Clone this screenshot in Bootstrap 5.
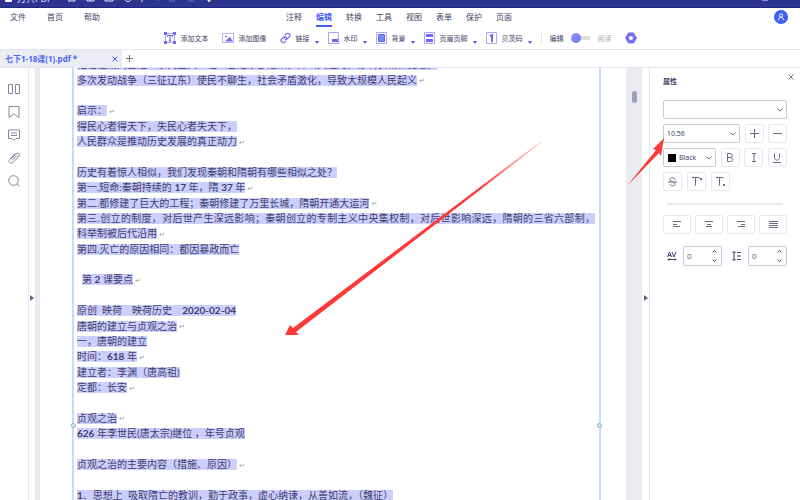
<!DOCTYPE html>
<html lang="zh-CN">
<head>
<meta charset="utf-8">
<meta name="viewport" content="width=device-width, initial-scale=1">
<title>七下1-18课(1).pdf</title>
<link href="https://cdn.jsdelivr.net/npm/bootstrap@5.3.0/dist/css/bootstrap.min.css" rel="stylesheet">
<style>
:root{--ink:#3f4268;--accent:#4a5ff0;--violet:#7467f5;--line:#e3e4ee;--field:#c9cad8}
body{font:8px/12px "Noto Sans CJK SC",sans-serif;color:var(--ink);background:#fff}
button{font:inherit;color:inherit;padding:0;border:0;background:none}
a{color:inherit;text-decoration:none}
svg{display:block;flex:none;fill:none;stroke:currentColor}
.title-strip{height:8px;background:#2c358f;border-bottom:1px solid #1d2680;color:#e8eafa}
.title-strip>div{height:16px}
.title-strip .dim{opacity:.35}
.brand{font-size:9px;font-family:"Open Sans","Noto Sans CJK SC",sans-serif}
.menu-row{height:18px}
.menu-left{gap:21px;padding-left:10px}
.menu-mid{gap:14px}
.side{flex:1 1 0}
.menu-mid a.on{color:var(--accent);font-weight:700;box-shadow:0 2px 0 #fff,0 4px 0 var(--accent)}
.avatar{width:14px;height:14px;background:#3d5cf5;color:#fff}
.tools{height:24px;gap:13px;font-size:7px;border-bottom:1px solid var(--line)}
.tools button{display:flex;align-items:center;gap:5px;white-space:nowrap}
.tools svg{color:var(--violet)}
.tools .drop::after{content:"";border:2px solid transparent;border-top:3px solid #5f50ee;border-bottom:0;margin-top:9px}
.tools .drop{margin-right:-4px}
.rule{width:1px;height:13px;background:var(--line)}
.mode{gap:7px;margin-left:-5px}
.form-check-input.sw{width:20px;height:10px;margin:0;border:0;background:linear-gradient(#dcdcdc,#dcdcdc) 5px 3px/14px 4px no-repeat;position:relative;float:none;box-shadow:none}
.form-check-input.sw::before{content:"";display:block;width:10px;height:10px;border-radius:50%;background:linear-gradient(135deg,#9593ff,#6578f5)}
.tabs{height:18px;border-bottom:1px solid var(--line)}
.file-tab{width:122px;background:#ebecf4;color:#4c66f5;font:700 8px/12px "Open Sans","Noto Sans CJK SC",sans-serif;padding:0 4px 0 5px}
.tab-new{width:14px;color:#777}
.rail{width:29px;border-right:1px solid var(--line);padding-top:13px;gap:7px;color:#84869b}
.rail button{height:16px}
.hinge{width:6px}
.hinge-r{width:8px;border-right:1px solid #e4e4ec}
.tri{border:3px solid transparent;border-left:4px solid #62657f;border-right:0;margin-top:28px}
.gutter{width:5px;background:#eaebf2}
.gutter-r{width:16px;background:#eaebf2;padding-top:23px}
.thumb{width:5px;height:12px;border-radius:3px;background:#9da0b6}
.sheet{padding:0 25px 0 32px;min-width:0}
.frame{border-left:2px solid #c4dcf8;border-right:2px solid #cbdcf5;position:relative}
.knob{position:absolute;top:355px;width:5px;height:5px;border:1px solid #7fa9cf;border-radius:50%;background:#d6f0f0}
.knob-l{left:-3px}.knob-r{right:-3px}
.clip{overflow:hidden}
.lines{display:grid;grid-auto-rows:minmax(0,1fr);margin:-11px 0 -3px;padding:0 4px 0 3px;height:calc(100% + 14px);font:10px/11px "Lato","Noto Sans CJK SC",serif;color:#3e3d70;white-space:pre}
.lines p{margin:0;display:flex;align-items:center}
.lines span{background:#cccffb}
.lines .ret::after{content:"↵";font:7px/11px "DejaVu Sans",sans-serif;color:#999;margin-left:2px;margin-top:3px}
.lines .full span{flex:1;text-align:justify;text-align-last:justify;white-space:normal}
.lines .ind{padding-left:5px}
.lines b{font-weight:700}
.props{width:150px;padding:0 13px}
.props h2{font-size:7px;line-height:12px;font-weight:700;margin:0}
.props-head{height:32px;padding-top:7px}
.x-btn{margin:-1px -7px 0 0}
.props .x-btn{color:#777a8c}
.g-5{gap:5px}
.props .form-select{font:7px/10px "Open Sans",sans-serif;color:#33355a;padding:0 12px 0 3px;border:1px solid var(--field);border-radius:2px;min-height:0;height:19px;background-size:6px;background-position:right 3px center;box-shadow:none}
.color-pick{border:1px solid var(--field);border-radius:2px;width:53px;height:19px;padding-left:4px}
.props .color-pick .form-select{border:0;height:17px;background-color:transparent}
.swatch{flex:none;width:8px;height:8px;background:#000}
.tool{width:19px;height:19px;border:1px solid #e7e7ed;border-radius:2px;display:flex;align-items:center;justify-content:center;color:#686b85}
.props .tool{border:1px solid #e7e7ed;color:#686b85}
.size-pick{width:77px}
.sep{height:2px;background:#e8e8ec;margin:7px 4px 5px}
.align{gap:4px}.align .tool{flex:1}
.spacing{padding:7px 0 0 4px}
.spin{width:39px;height:20px;border:1px solid var(--field);border-radius:2px}
.spin input{width:20px;border:0;padding:0 0 0 3px;font:8px/12px "Open Sans",sans-serif;color:#555875;background:none}
.spin div{width:13px}
.arrows{position:absolute;left:0;top:0;pointer-events:none}
</style>
<script src="https://cdn.jsdelivr.net/npm/bootstrap@5.3.0/dist/js/bootstrap.bundle.min.js"></script>
</head>
<body class="d-flex flex-column vh-100 overflow-hidden">
<header>
 <div class="title-strip d-flex align-items-end overflow-hidden">
  <div class="d-flex align-items-center w-100 px-1">
   <svg width="9" height="12" viewBox="0 0 9 12"><rect x="1" y="1" width="7" height="8" rx="1" fill="#fff" stroke="none"/></svg>
   <span class="brand ps-1">万兴PDF</span>
   <svg class="ms-3" width="160" height="16" viewBox="0 0 160 16"><path d="M0 5v5h7V5M19 5v5h7V5M22 5v5M37 5v5h8V5M56 6c0 6 8 6 8 0M74 4v7"/><path class="dim" d="M90 3v7M101 10h6M120 10h6"/><path d="M139 8h4l-2 3z" fill="currentColor"/></svg>
   <svg class="ms-auto" width="36" height="16" viewBox="0 0 36 16"><path d="M2 5v4h6V5M26 9l5-5 4 5"/></svg>
  </div>
 </div>
 <nav class="menu-row d-flex align-items-center" aria-label="主菜单">
  <div class="side menu-left d-flex"><a href="#">文件</a><a href="#">首页</a><a href="#">帮助</a></div>
  <div class="menu-mid d-flex"><a href="#">注释</a><a class="on" href="#">编辑</a><a href="#">转换</a><a href="#">工具</a><a href="#">视图</a><a href="#">表单</a><a href="#">保护</a><a href="#">页面</a></div>
  <div class="side d-flex justify-content-end pe-2 me-1"><button class="avatar rounded-circle d-flex align-items-center justify-content-center" aria-label="账户"><svg width="8" height="8" viewBox="0 0 8 8"><circle cx="4" cy="2.5" r="1.7"/><path d="M1.2 7.5c.3-4 5.3-4 5.6 0"/></svg></button></div>
 </nav>
 <div class="tools d-flex align-items-center justify-content-center">
  <button><svg width="12" height="12" viewBox="0 0 12 12"><path d="M1.5 1.5h9v9h-9z" stroke="#aaa4fa"/><path d="M0 0h3v3H0zM9 0h3v3H9zM0 9h3v3H0zM9 9h3v3H9z" fill="currentColor" stroke="none"/><path d="M3.5 5V3.500h5V5M6 3.500V9M4.700 9h2.600" stroke="#6256e8"/></svg>添加文本</button>
  <button><svg width="12" height="12" viewBox="0 0 12 12"><path d="M.5 1.5h11v9H.5z" stroke="#b7b1fb"/><path d="M3 9.500 7.700 4.700l3.400 4.800z" fill="currentColor" stroke="none"/><circle cx="4" cy="4.500" r="1" fill="currentColor" stroke="none"/></svg>添加图像</button>
  <button class="drop"><svg width="11" height="12" viewBox="0 0 16 16"><path stroke-width="1.7" d="m7 4 2-2c3-2 7 1 5 4l-3 3c-2 2-5 1-5-2M9 12l-2 2c-3 2-7-1-5-4l3-3c2-2 5-1 5 2"/></svg>链接</button>
  <button class="drop"><svg width="11" height="12" viewBox="0 0 11 12"><path d="M.5.5h10v11H.5z" stroke="#aaa4fa"/><path d="M4 7h6v3H4z" fill="currentColor" stroke="none"/></svg>水印</button>
  <button class="drop"><svg width="11" height="12" viewBox="0 0 11 12"><path d="M.5.5h10v11H.5z" stroke="#aaa4fa"/><path d="M2.500 2.500h6v7h-6z" fill="#708af5" stroke="#6469ee"/></svg>背景</button>
  <button class="drop"><svg width="11" height="12" viewBox="0 0 11 12"><path d="M.5.5h10v11H.5z" stroke="#aaa4fa"/><path d="M2 2h7v3H2zM2 7h7v3H2z" fill="currentColor" stroke="none"/></svg>页眉页脚</button>
  <button class="drop"><svg width="11" height="12" viewBox="0 0 11 12"><path d="M.5.5h10v11H.5z" stroke="#aaa4fa"/><path d="M4 4 6 3v7" stroke-width="2"/></svg>贝茨码</button>
  <span class="rule"></span>
  <div class="mode d-flex align-items-center"><label for="mode">编辑</label><input class="form-check-input sw" type="checkbox" id="mode" role="switch"><label for="mode" class="text-black-50 opacity-75">阅读</label></div>
  <button aria-label="设置"><svg width="12" height="12" viewBox="0 0 12 12"><path d="M3.500 1h5l3 5-3 5h-5L.5 6z" fill="#7471f5"/><circle cx="6" cy="6" r="2" fill="#fff" stroke="none"/></svg></button>
 </div>
 <div class="tabs d-flex">
  <div class="file-tab d-flex align-items-center justify-content-between"><a href="#">七下1-18课(1).pdf *</a><button aria-label="关闭标签"><svg width="6" height="6" viewBox="0 0 6 6"><path d="m.5.5 5 5m0-5-5 5"/></svg></button></div>
  <button class="tab-new d-flex align-items-center justify-content-center" aria-label="新标签"><svg width="7" height="7" viewBox="0 0 7 7"><path d="M3.500 0v7M0 3.500h7"/></svg></button>
 </div>
</header>
<main class="d-flex flex-fill position-relative overflow-hidden">
 <nav class="rail d-flex flex-column align-items-center" aria-label="侧栏">
  <button aria-label="缩略图"><svg width="12" height="10" viewBox="0 0 12 10"><path d="M.5.5h4v9h-4zM7.500.5h4v9h-4z"/></svg></button>
  <button aria-label="书签"><svg width="12" height="12" viewBox="0 0 12 12"><path d="M1 .5h10v11L6 8l-5 3.500z"/></svg></button>
  <button aria-label="注释"><svg width="12" height="12" viewBox="0 0 12 12"><path d="M.5 1h11v8.500H8l-2 2-2-2H.5zM3 4h6M3 6.500h6"/></svg></button>
  <button aria-label="附件"><svg width="13" height="12" viewBox="0 0 13 12"><path d="m3 7 5-5c2-1.700 4.500 0 3 2L5.500 10c-2.500 2.500-6 0-4-2.500L7 1.500M4 8.500l5-5"/></svg></button>
  <button aria-label="搜索"><svg width="12" height="12" viewBox="0 0 12 12"><circle cx="5.500" cy="5.500" r="4.800"/><path d="m9 9 2.500 2.500"/></svg></button>
 </nav>
 <div class="hinge d-flex align-items-center justify-content-center"><span class="tri"></span></div>
 <div class="gutter"></div>
 <article class="sheet flex-fill d-flex">
  <div class="frame flex-fill">
   <div class="clip h-100"><div class="lines">
<p><span>他在位期间营建一系列重大工程（营建东都洛阳，开凿大运河，修筑长城和驰道，</span></p>
<p class="ret"><span>多次发动战争（三征辽东）使民不聊生，社会矛盾激化，导致大规模人民起义</span></p>
<p></p>
<p class="ret"><span>启示：</span></p>
<p><span>得民心者得天下，失民心者失天下，</span></p>
<p class="ret"><span>人民群众是推动历史发展的真正动力</span></p>
<p></p>
<p><span>历史有着惊人相似，我们发现秦朝和隋朝有哪些相似之处？</span></p>
<p class="ret"><span>第一.短命:秦朝持续的 <b>17</b> 年，隋 <b>37</b> 年</span></p>
<p class="ret"><span>第二.都修建了巨大的工程；秦朝修建了万里长城，隋朝开通大运河</span></p>
<p class="full"><span>第三.创立的制度，对后世产生深远影响；秦朝创立的专制主义中央集权制，对后世影响深远，隋朝的三省六部制，</span></p>
<p class="ret"><span>科举制被后代沿用</span></p>
<p><span>第四.灭亡的原因相同：都因暴政而亡</span></p>
<p></p>
<p class="ret ind"><span>第 <b>2</b> 课要点</span></p>
<p></p>
<p><span>原创  映荷　映荷历史　<b>2020-02-04</b></span></p>
<p class="ret"><span>唐朝的建立与贞观之治</span></p>
<p><span>一，唐朝的建立</span></p>
<p class="ret"><span>时间：<b>618</b> 年</span></p>
<p><span>建立者：李渊（唐高祖)</span></p>
<p class="ret"><span>定都：长安</span></p>
<p></p>
<p class="ret"><span>贞观之治</span></p>
<p><span><b>626</b> 年李世民(唐太宗)继位 ，年号贞观</span></p>
<p></p>
<p class="ret"><span>贞观之治的主要内容（措施、原因）</span></p>
<p></p>
<p><span><b>1</b>、思想上  吸取隋亡的教训，勤于政事，虚心纳谏，从善如流，（魏征）</span></p>
   </div></div>
   <i class="knob knob-l"></i><i class="knob knob-r"></i>
  </div>
 </article>
 <div class="gutter-r d-flex justify-content-center"><span class="thumb"></span></div>
 <div class="hinge-r d-flex align-items-center justify-content-center"><span class="tri"></span></div>
 <aside class="props">
  <div class="props-head d-flex align-items-start justify-content-between"><h2>属性</h2><button class="x-btn" aria-label="关闭"><svg width="6" height="6" viewBox="0 0 6 6"><path d="m.5.5 5 5m0-5-5 5"/></svg></button></div>
  <div class="d-flex flex-column g-5">
   <select class="form-select" aria-label="字体"><option></option></select>
   <div class="d-flex justify-content-between"><select class="form-select size-pick" aria-label="字号"><option>10.56</option></select><button class="tool" aria-label="增大"><svg width="9" height="9" viewBox="0 0 9 9"><path d="M4.500 0v9M0 4.500h9"/></svg></button><button class="tool" aria-label="减小"><svg width="9" height="9" viewBox="0 0 9 9"><path d="M0 4.500h9"/></svg></button></div>
   <div class="d-flex justify-content-between">
    <div class="color-pick d-flex align-items-center"><span class="swatch"></span><select class="form-select" aria-label="颜色"><option>Black</option></select></div>
    <button class="tool" aria-label="粗体"><svg width="8" height="9" viewBox="0 0 8 9"><path d="M1.500.5v8h3c3 0 3-4 0-4h-3 2.500c3 0 3-4 0-4z"/></svg></button>
    <button class="tool" aria-label="斜体"><svg width="8" height="9" viewBox="0 0 8 9"><path d="M2 .5h4M2 8.500h4M4 .5v8"/></svg></button>
    <button class="tool" aria-label="下划线"><svg width="8" height="10" viewBox="0 0 8 10"><path d="M1.500.5v4c0 3.500 5 3.500 5 0v-4M0 9.500h8"/></svg></button>
   </div>
   <div class="d-flex g-5">
    <button class="tool" aria-label="删除线"><svg width="9" height="10" viewBox="0 0 9 10"><path d="M7 3c0-3-5-3-5-.5S7 4.500 7 7 2 9.500 2 7M0 5h9"/></svg></button>
    <button class="tool" aria-label="上标"><svg width="10" height="9" viewBox="0 0 10 9"><path d="M0 1.500V.5h7v1M3.500.5v8"/><path d="M8 1h2v2H8z" fill="currentColor" stroke="none"/></svg></button>
    <button class="tool" aria-label="下标"><svg width="10" height="9" viewBox="0 0 10 9"><path d="M0 1.500V.5h7v1M3.500.5v8"/><path d="M7 7h2v2H7z" fill="currentColor" stroke="none"/></svg></button>
   </div>
   <div class="sep"></div>
   <div class="d-flex align">
    <button class="tool" aria-label="左对齐"><svg width="8" height="7" viewBox="0 0 8 7"><path d="M0 .5h8M0 3.500h4M0 5.500h7"/></svg></button>
    <button class="tool" aria-label="居中"><svg width="8" height="7" viewBox="0 0 8 7"><path d="M0 .5h8M2 3.500h4M1 5.500h6"/></svg></button>
    <button class="tool" aria-label="右对齐"><svg width="8" height="7" viewBox="0 0 8 7"><path d="M0 .5h8M4 3.500h4M1 5.500h7"/></svg></button>
    <button class="tool" aria-label="两端对齐"><svg width="9" height="7" viewBox="0 0 9 7"><path d="M0 .5h9M0 2.500h9M0 4.500h9M0 6.500h9"/></svg></button>
   </div>
   <div class="spacing d-flex align-items-center justify-content-between">
    <label for="track" title="字距"><svg width="10" height="10" viewBox="0 0 10 10"><path d="m.5 6 2-5 2 5M1.200 4.500h2.600M5 1l2 5 2-5M1 8.500h8M2 7.500l-1 1 1 1M8 7.500l1 1-1 1"/></svg></label>
    <div class="spin d-flex justify-content-between"><input id="track" value="0"><div class="d-flex flex-column justify-content-around align-items-center"><button aria-label="增加"><svg width="5" height="3" viewBox="0 0 5 3"><path d="m.5 2.500 2-2 2 2"/></svg></button><button aria-label="减少"><svg width="5" height="3" viewBox="0 0 5 3"><path d="m.5.5 2 2 2-2"/></svg></button></div></div>
    <label for="leading" class="ps-1" title="行距"><svg width="10" height="10" viewBox="0 0 10 10"><path d="M2 .5v9M.5 2 2 .5 3.500 2M.5 8 2 9.500 3.500 8M5 1.500h4M5 5h4M5 8.500h4"/></svg></label>
    <div class="spin d-flex justify-content-between"><input id="leading" value="0"><div class="d-flex flex-column justify-content-around align-items-center"><button aria-label="增加"><svg width="5" height="3" viewBox="0 0 5 3"><path d="m.5 2.500 2-2 2 2"/></svg></button><button aria-label="减少"><svg width="5" height="3" viewBox="0 0 5 3"><path d="m.5.5 2 2 2-2"/></svg></button></div></div>
   </div>
  </div>
 </aside>
 <svg class="arrows" width="800" height="432" viewBox="0 0 800 432" stroke="none">
  <defs><linearGradient id="fade" gradientUnits="userSpaceOnUse" x1="541" y1="74" x2="480" y2="119"><stop offset="0" stop-color="#ff3838" stop-opacity=".2"/><stop offset="1" stop-color="#ff3838"/></linearGradient></defs>
  <path stroke="none" fill="url(#fade)" d="M285 267 290 257 293 260 540 74 542 74 296 264 299 267z"/>
  <path stroke="none" fill="#fb3b38" d="M664 70 653 81 656 82 627 118 659 85 661 88z"/>
 </svg>
</main>
</body>
</html>
